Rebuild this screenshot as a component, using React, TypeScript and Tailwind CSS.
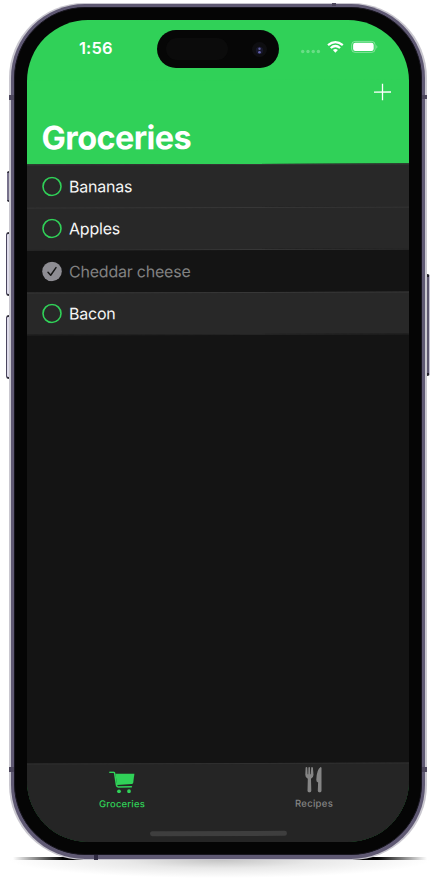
import React from "react";

type Item = { name: string; done?: boolean };

const items: Item[] = [
  { name: "Bananas" },
  { name: "Apples" },
  { name: "Cheddar cheese", done: true },
  { name: "Bacon" },
];

function StatusBar() {
  return (
    <div className="flex h-[60px] items-start">
      <div className="w-[130px] pl-[52px] pt-[18px] text-[16.5px] leading-5 font-semibold tracking-[0.1px] text-white">
        1:56
      </div>
      <div className="mt-[10px] flex h-[38px] w-[122px] items-center justify-between rounded-full bg-[#060606] pr-[12px] pl-[9px]">
        <div className="h-[22px] w-[62px] rounded-full bg-[#0b0b0b]" />
        <svg className="h-4 w-4" viewBox="0 0 16 16">
          <circle cx="8.5" cy="8.5" r="7.5" fill="#0e0e11" />
          <circle cx="8.5" cy="9.4" r="3.7" fill="#17172c" />
          <circle cx="8.5" cy="7.8" r="1.2" fill="#5c5c9c" />
          <circle cx="8.5" cy="11.3" r="1.3" fill="#6262ae" />
        </svg>
      </div>
      <svg className="mt-[18px] ml-[21px] h-5 w-20" viewBox="0 0 80 20">
        <g fill="#fff" fillOpacity=".28">
          <circle cx="2.7" cy="13.5" r="1.7" />
          <circle cx="8" cy="13.5" r="1.7" />
          <circle cx="13.2" cy="13.5" r="1.7" />
          <circle cx="18.4" cy="13.5" r="1.7" />
        </g>
        <g fill="none" stroke="#fff" strokeWidth="2.2">
          <path d="M28 7.2Q35.4 .9 42.8 7.2" />
          <path d="M30.7 10Q35.4 6 40.1 10" />
        </g>
        <path d="M32.9 12.1Q35.4 10.1 37.9 12.1L35.4 14.7Z" fill="#fff" />
        <rect x="51.7" y="3.4" width="23.4" height="11" rx="3.4" fill="none" stroke="#fff" strokeOpacity=".4" />
        <rect x="53.1" y="4.8" width="20.6" height="8.2" rx="2.2" fill="#fff" />
        <path d="M76.4 7Q78.4 8.9 76.4 10.8Z" fill="#fff" fillOpacity=".45" />
      </svg>
    </div>
  );
}

function Check({ done }: { done?: boolean }) {
  return (
    <svg className="h-5 w-5 shrink-0" viewBox="0 0 20 20" fill="none">
      {done ? (
        <>
          <circle cx="10" cy="10" r="9.8" fill="#8e8d93" />
          <path d="M6 10.8L8.7 13.8L14 6.2" stroke="#171717" strokeWidth="1.5" strokeLinecap="round" strokeLinejoin="round" />
        </>
      ) : (
        <circle cx="10" cy="10" r="9" stroke="#30d158" strokeWidth="1.6" />
      )}
    </svg>
  );
}

function TabBar() {
  return (
    <div className="h-[85px] border-t border-[#303030] bg-[#252525]">
      <div className="flex h-[67px]">
        <div className="flex w-1/2 flex-col items-center pt-[7px] pr-[1px] text-[#30d158]">
          <svg className="h-[22px] w-[26px]" viewBox="0 0 26 22">
            <path d="M6.4 2.4H25.4L24.2 11.4Q24 12.7 22.6 12.8L8.1 13.6Z" fill="currentColor" />
            <path d="M.8 1H4.7Q5.5 1 5.6 1.9L7.5 14.2Q7.7 15.6 9.2 15.6H22.4" fill="none" stroke="currentColor" strokeWidth="1.5" strokeLinecap="round" />
            <circle cx="10" cy="20" r="1.9" fill="currentColor" />
            <circle cx="20" cy="20" r="1.9" fill="currentColor" />
          </svg>
          <span className="mt-[5px] text-[9.5px] leading-3 font-medium tracking-[0.2px]">Groceries</span>
        </div>
        <div className="flex w-1/2 flex-col items-center pt-[3px] pl-[1px] text-[#858585]">
          <svg className="h-[26px] w-[18px]" viewBox="0 0 18 26" fill="currentColor">
            <path d="M1.4 .3Q2.2 .3 2.3 1L2.6 7.5H3.2L3.4 1Q3.5 .3 4.2 .3T5 1L5.2 7.5H5.8L6.2 1Q6.3 .3 7 .3T7.9 1L8.5 8Q8.6 10.6 6 11.9L6.3 24Q6.3 25.8 4.4 25.8T2.5 24L2.8 11.9Q.1 10.6.3 8L.6 1Q.7.3 1.4.3Z" />
            <path d="M15.6 .3Q16.5 .3 16.5 1.3V24Q16.5 25.8 14.7 25.8T12.8 24L13.1 15.9Q11.1 15 11.3 13Q11.6 2.8 15.6 .3Z" />
          </svg>
          <span className="mt-[5px] text-[9.5px] leading-3 font-medium tracking-[0.3px]">Recipes</span>
        </div>
      </div>
      <div className="mx-auto h-[5px] w-[137px] rounded-full bg-[#3e3e3e]" />
    </div>
  );
}

function Screen() {
  return (
    <div className="h-[822px] w-[382px] overflow-hidden rounded-[61px] bg-[#30d158]">
      <StatusBar />
      <div className="flex h-[84.3px] -skew-y-[0.16deg] flex-col bg-[#30d158]">
        <div className="flex justify-end pt-[4px] pr-[18px]">
          <svg className="h-[17px] w-[17px]" viewBox="0 0 17 17">
            <path d="M8.5 0V17M0 8.5H17" stroke="#fff" strokeWidth="1.3" />
          </svg>
        </div>
        <h1 className="mt-[15px] pl-[14.5px] text-[32.5px] leading-[44px] font-bold tracking-[-0.6px] text-white">Groceries</h1>
      </div>
      <div className="-skew-y-[0.16deg] bg-[#141414]">
        <ul className="h-[598.7px]">
          {items.map((item) => (
            <li
              key={item.name}
              className={`flex h-[42.5px] items-center gap-[7.5px] border-t border-[#373737] pl-[14.5px] text-[16px] tracking-[-0.22px] ${
                item.done ? "bg-[#141414] text-[#818181]" : "bg-[#282828] text-[#f5f5f5]"
              }`}
            >
              <Check done={item.done} />
              <span>{item.name}</span>
            </li>
          ))}
          <li className="h-px bg-[#242424]" />
        </ul>
        <TabBar />
      </div>
    </div>
  );
}

/* Antenna bands painted across the frame */
function Bands() {
  return (
    <svg className="pointer-events-none absolute inset-0 h-full w-full" viewBox="0 0 418 857" fill="#4d475d">
      <path d="M0 92H5V97H0ZM413 92H418V96H413ZM0 764H5V769H0ZM413 764H418V769H413ZM323 0H327V3H323Z" />
      <path d="M85 852H89V857H85Z" fill="#302b42" />
    </svg>
  );
}

export default function App() {
  return (
    <main className="flex h-[885px] w-[439px] flex-col overflow-hidden bg-white pt-[3px] font-['Inter','Liberation_Sans',sans-serif]">
      <div className="z-10 flex h-[857px]">
        <div className="flex w-[9px] flex-col items-end pt-[168px]">
          <div className="h-[31px] w-[2px] rounded-l-sm border-y-2 border-y-[#302e3a] bg-[#77718c]" />
          <div className="mt-[30px] h-[64px] w-[3px] rounded-l-sm border-y-2 border-l border-y-[#302e3a] border-l-[#4b465f] bg-[#dedbea]" />
          <div className="mt-[19px] h-[64px] w-[3px] rounded-l-sm border-y-2 border-l border-y-[#302e3a] border-l-[#4b465f] bg-[#dedbea]" />
        </div>
        <div className="relative w-[418px] rounded-[75px] bg-[#c9c7cf] px-[2px] py-[1px]">
          <div className="h-full rounded-[74px] bg-[#5f5973] px-[3px] pt-[3px] pb-[4px]">
            <div className="h-full rounded-[71px] border border-[#17151e] bg-[#050505] px-[12px] pt-[12px]">
              <Screen />
            </div>
          </div>
          <Bands />
        </div>
        <div className="flex flex-col pt-[271px]">
          <div className="h-[102px] w-[3px] rounded-r-sm border-y-3 border-r border-y-[#22212a] border-r-[#c5c1d2] bg-[#5e5870]" />
        </div>
      </div>

      {/* Contact line and soft ground shadow */}
      <div className="mx-auto -mt-[3px] h-[3px] w-[414px] shrink-0 bg-[linear-gradient(to_right,transparent,#000_12%,#000_88%,transparent)]" />
      <div className="mx-auto h-[18px] w-[420px] bg-[radial-gradient(ellipse_50%_100%_at_50%_0%,#c4c4c4,#e8e8e8_45%,#fff_100%)]" />
    </main>
  );
}
